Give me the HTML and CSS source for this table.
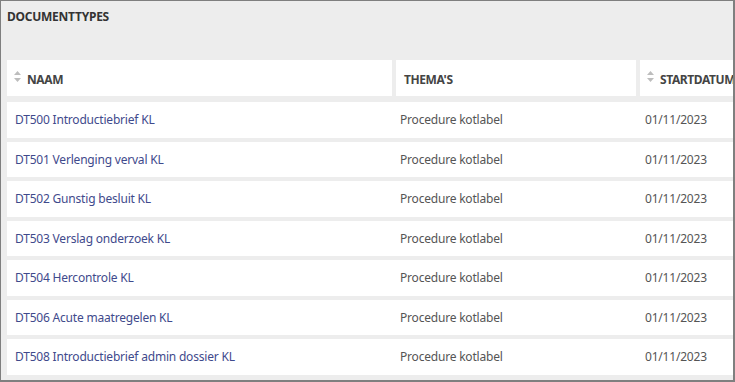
FILE: index.html
```html
<!DOCTYPE html>
<html lang="nl">
<head>
<meta charset="utf-8">
<title>Documenttypes</title>
<link rel="stylesheet" href="styles.css">
</head>
<body>
<div class="frame">
  <h1 class="title">DOCUMENTTYPES</h1>
  <div class="table">
    <div class="head">
      <div class="th th-naam"><span class="sort"><svg width="7" height="11" viewBox="0 0 7 11"><path d="M3.5 0L7 4H0z" fill="#bdbdbd"/><path d="M3.5 11L7 7H0z" fill="#bdbdbd"/></svg></span>NAAM</div>
      <div class="th th-thema">THEMA'S</div>
      <div class="th th-datum"><span class="sort"><svg width="7" height="11" viewBox="0 0 7 11"><path d="M3.5 0L7 4H0z" fill="#bdbdbd"/><path d="M3.5 11L7 7H0z" fill="#bdbdbd"/></svg></span>STARTDATUM</div>
    </div>
    <div class="rows">
      <div class="row"><a class="td td-naam" href="#">DT500 Introductiebrief KL</a><div class="td td-thema">Procedure kotlabel</div><div class="td td-datum">01/11/2023</div></div>
      <div class="row"><a class="td td-naam" href="#">DT501 Verlenging verval KL</a><div class="td td-thema">Procedure kotlabel</div><div class="td td-datum">01/11/2023</div></div>
      <div class="row"><a class="td td-naam" href="#">DT502 Gunstig besluit KL</a><div class="td td-thema">Procedure kotlabel</div><div class="td td-datum">01/11/2023</div></div>
      <div class="row"><a class="td td-naam" href="#">DT503 Verslag onderzoek KL</a><div class="td td-thema">Procedure kotlabel</div><div class="td td-datum">01/11/2023</div></div>
      <div class="row"><a class="td td-naam" href="#">DT504 Hercontrole KL</a><div class="td td-thema">Procedure kotlabel</div><div class="td td-datum">01/11/2023</div></div>
      <div class="row"><a class="td td-naam" href="#">DT506 Acute maatregelen KL</a><div class="td td-thema">Procedure kotlabel</div><div class="td td-datum">01/11/2023</div></div>
      <div class="row"><a class="td td-naam" href="#">DT508 Introductiebrief admin dossier KL</a><div class="td td-thema">Procedure kotlabel</div><div class="td td-datum">01/11/2023</div></div>
    </div>
  </div>
</div>
</body>
</html>
```
FILE: styles.css
```css
* { box-sizing: border-box; }
html, body { margin: 0; padding: 0; }
body {
  font-family: "Noto Sans", "Open Sans", sans-serif;
  font-size: 12px;
  color: #555;
}
.frame {
  width: 735px;
  height: 382px;
  background: #ededed;
  border: 1px solid #7f7f7f;
  border-right-width: 2px;
  border-bottom-width: 2px;
  overflow: hidden;
  padding-left: 6px;
}
.title {
  margin: 0;
  height: 59px;
  padding-top: 8px;
  font-size: 12px;
  font-weight: 700;
  color: #333;
  letter-spacing: -0.25px;
  line-height: 16px;
}
.head, .row {
  display: grid;
  grid-template-columns: 385px 240px 200px;
  column-gap: 4px;
  width: 829px;
}
.th {
  background: #fff;
  height: 36px;
  display: flex;
  align-items: center;
  font-weight: 700;
  color: #444;
  font-size: 12px;
  letter-spacing: -0.4px;
  padding-top: 2px;
}
.th-naam { padding-left: 7px; }
.th-thema { padding-left: 8px; }
.th-datum { padding-left: 7px; }
.sort {
  display: inline-flex;
  width: 13px;
  margin-top: -6px;
}
.rows {
  display: flex;
  flex-direction: column;
  gap: 4px;
  margin-top: 6px;
}
.row {
  background: #fff;
  height: 35.5px;
  align-items: center;
  padding-top: 1px;
}
.td {
  font-size: 12px;
  letter-spacing: -0.2px;
  line-height: 16px;
  color: #555;
}
.td-naam { padding-left: 8px; color: #3f4a8c; text-decoration: none; }
.td-thema { padding-left: 4px; }
.td-datum { padding-left: 5px; }
```
